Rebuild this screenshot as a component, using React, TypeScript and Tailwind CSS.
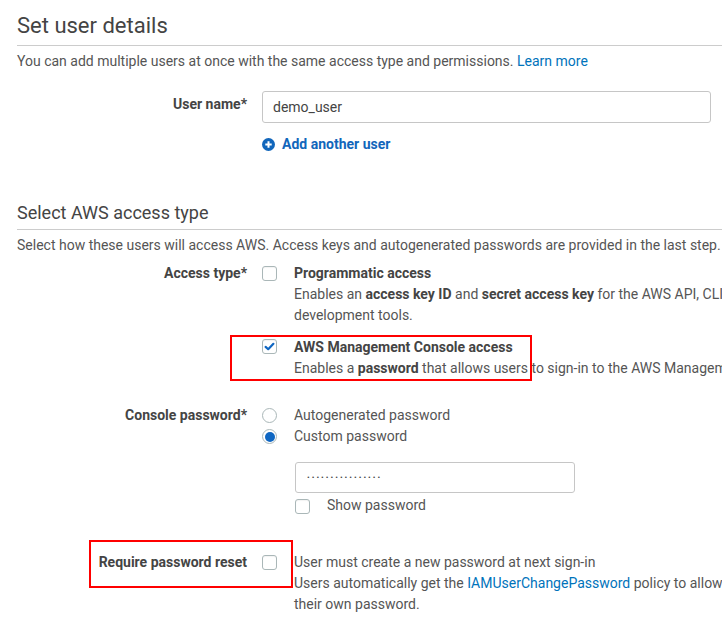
import React from "react";

function Checkbox({ checked = false }: { checked?: boolean }) {
  return (
    <div className="w-[15px] h-[15px] rounded-[3px] border border-[#aab7b8] bg-white flex items-center justify-center shadow-[inset_0_1px_1px_rgba(0,0,0,0.05)]">
      {checked && (
        <svg width="11" height="9" viewBox="0 0 11 9">
          <path d="M1.6 4.9 L4.2 7.2 L9.4 1.8" fill="none" stroke="#0f66c2" strokeWidth="2.2" strokeLinecap="round" strokeLinejoin="round" />
        </svg>
      )}
    </div>
  );
}

function Radio({ checked = false }: { checked?: boolean }) {
  return (
    <div className="w-[15px] h-[15px] rounded-full border border-[#aab7b8] bg-white flex items-center justify-center">
      {checked && <div className="w-[10px] h-[10px] rounded-full bg-[#0f66c2]" />}
    </div>
  );
}

function Label({ children, className = "" }: { children: React.ReactNode; className?: string }) {
  return (
    <div className={"w-[230px] shrink-0 text-right font-bold text-[#444] whitespace-nowrap " + className}>{children}</div>
  );
}

export default function App() {
  return (
    <div className="relative w-[722px] h-[632px] overflow-hidden bg-white font-['Roboto',sans-serif] text-[14px] leading-[21px] text-[#555]">
      <div className="pl-[17px]">
        {/* Section 1 */}
        <h2 className="pt-[11px] pb-[4px] text-[22px] leading-[30px] font-normal text-[#444] border-b border-[#ccc]">
          Set user details
        </h2>
        <p className="mt-[5px] whitespace-nowrap">
          You can add multiple users at once with the same access type and permissions.{" "}
          <span className="text-[#0073bb]">Learn more</span>
        </p>

        <div className="mt-[19px] flex items-start">
          <Label className="pt-[3px]">User name*</Label>
          <div className="ml-[15px] w-[449px] h-[32px] border border-[#c6c6c6] rounded-[3px] flex items-center px-[10px] text-[#444]">
            demo_user
          </div>
        </div>
        <div className="mt-[11px] flex">
          <div className="w-[230px] shrink-0" />
          <div className="ml-[15px] flex items-center gap-[7px] font-bold text-[#1166bb]">
            <svg width="13" height="13" viewBox="0 0 13 13">
              <circle cx="6.5" cy="6.5" r="6.5" fill="#1166bb" />
              <path d="M6.5 3.3 V9.7 M3.3 6.5 H9.7" stroke="#fff" strokeWidth="2" />
            </svg>
            <span>Add another user</span>
          </div>
        </div>

        {/* Section 2 */}
        <h2 className="mt-[45px] pb-[3px] text-[18px] leading-[26px] font-normal text-[#444] border-b border-[#ccc]">
          Select AWS access type
        </h2>
        <p className="mt-[5px] whitespace-nowrap">
          Select how these users will access AWS. Access keys and autogenerated passwords are provided in the last step.
        </p>

        <div className="mt-[7px] flex items-start">
          <Label>Access type*</Label>
          <div className="ml-[15px] pt-[3px]">
            <Checkbox />
          </div>
          <div className="ml-[17px] whitespace-nowrap">
            <div className="font-bold text-[#444]">Programmatic access</div>
            <div>
              Enables an <b className="text-[#444]">access key ID</b> and <b className="text-[#444]">secret access key</b> for the AWS API, CLI, SDK, and other
            </div>
            <div>development tools.</div>
          </div>
        </div>
        <div className="mt-[11px] flex items-start">
          <div className="w-[230px] shrink-0" />
          <div className="ml-[15px] pt-[2px]">
            <Checkbox checked />
          </div>
          <div className="ml-[17px] whitespace-nowrap">
            <div className="font-bold text-[#444]">AWS Management Console access</div>
            <div>
              Enables a <b className="text-[#444]">password</b> that allows users to sign-in to the AWS Management Console.
            </div>
          </div>
        </div>

        <div className="mt-[26px] flex items-start">
          <Label>Console password*</Label>
          <div className="ml-[15px] flex flex-col">
            <div className="flex items-start">
              <div className="pt-[3px]">
                <Radio />
              </div>
              <div className="ml-[17px]">Autogenerated password</div>
            </div>
            <div className="flex items-start">
              <div className="pt-[3px]">
                <Radio checked />
              </div>
              <div className="ml-[17px]">Custom password</div>
            </div>
          </div>
        </div>
        <div className="mt-[15px] flex">
          <div className="w-[230px] shrink-0" />
          <div className="ml-[48px] flex flex-col">
            <div className="w-[280px] h-[31px] border border-[#c6c6c6] rounded-[3px] flex items-center px-[11px] text-[8px] tracking-[2px] text-[#444]">
              ••••••••••••••••
            </div>
            <div className="mt-[2px] flex items-start">
              <div className="pt-[4px]">
                <Checkbox />
              </div>
              <div className="ml-[17px]">Show password</div>
            </div>
          </div>
        </div>

        <div className="mt-[36px] flex items-start">
          <Label>Require password reset</Label>
          <div className="ml-[15px] pt-[3px]">
            <Checkbox />
          </div>
          <div className="ml-[17px] whitespace-nowrap">
            <div>User must create a new password at next sign-in</div>
            <div>
              Users automatically get the <span className="text-[#0073bb]">IAMUserChangePassword</span> policy to allow them to change
            </div>
            <div>their own password.</div>
          </div>
        </div>
      </div>

      {/* Annotation boxes */}
      <div className="absolute left-[230px] top-[335px] w-[302px] h-[46px] border-2 border-[#f00] pointer-events-none" />
      <div className="absolute left-[89px] top-[540px] w-[204px] h-[48px] border-2 border-[#f00] pointer-events-none" />
    </div>
  );
}
